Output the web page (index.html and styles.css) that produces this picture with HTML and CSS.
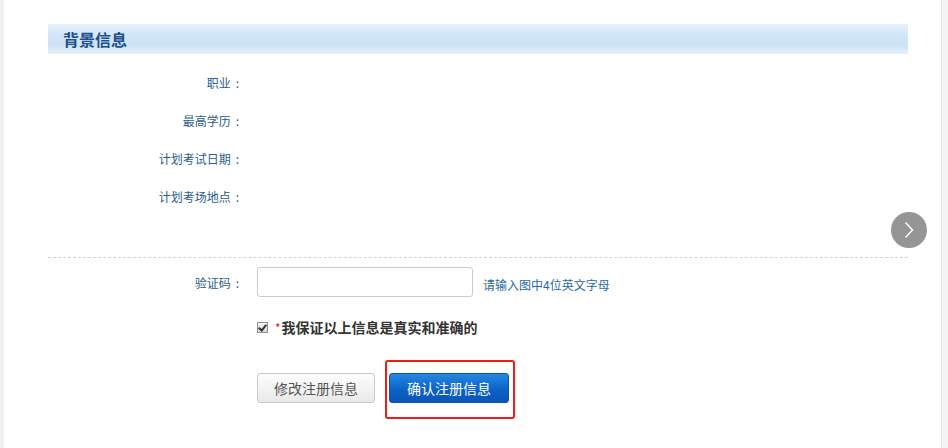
FILE: index.html
```html
<!DOCTYPE html>
<html lang="zh-CN">

<head>
    <title>背景信息</title>
    <link rel="stylesheet" href="styles.css">
</head>

<body>
    <div class="page">
        <div class="edge-left"></div>
        <div class="main">
            <div class="section-title">背景信息</div>

            <div class="rows">
                <div class="row">
                    <div class="label">职业<span class="colon">:</span></div>
                    <div class="value"></div>
                </div>
                <div class="row">
                    <div class="label">最高学历<span class="colon">:</span></div>
                    <div class="value"></div>
                </div>
                <div class="row">
                    <div class="label">计划考试日期<span class="colon">:</span></div>
                    <div class="value"></div>
                </div>
                <div class="row">
                    <div class="label">计划考场地点<span class="colon">:</span></div>
                    <div class="value"></div>
                </div>
            </div>

            <a class="next-btn" href="#">
                <svg width="36" height="36" viewBox="0 0 36 36">
                    <path d="M14.5 10.5 L21.5 18 L14.5 25.5" fill="none" stroke="#ffffff" stroke-width="1.5" />
                </svg>
            </a>

            <div class="divider"></div>

            <div class="captcha-row">
                <div class="label">验证码<span class="colon">:</span></div>
                <input type="text" class="captcha-input">
                <span class="hint">请输入图中4位英文字母</span>
            </div>

            <div class="agree-row">
                <input type="checkbox" id="agree" checked>
                <label for="agree"><span class="star">*</span>我保证以上信息是真实和准确的</label>
            </div>

            <div class="button-row">
                <button class="btn btn-gray">修改注册信息</button>
                <div class="highlight">
                    <button class="btn btn-blue">确认注册信息</button>
                </div>
            </div>
        </div>
        <div class="edge-right"></div>
    </div>
</body>

</html>
```

FILE: styles.css
```css
body {
    margin: 0;
    font-family: "Noto Sans CJK SC", "Liberation Sans", sans-serif;
    font-size: 12px;
    color: #333333;
    background: #ffffff;
}

.page {
    display: flex;
    height: 448px;
    overflow: hidden;
}

.edge-left {
    width: 4px;
    background: #f0f0f0;
}

.edge-right {
    width: 6px;
    background: #f3f3f3;
    border-left: 1px solid #e6e6e6;
}

.main {
    flex: 1;
    position: relative;
    padding: 24px 33px 0 44px;
}

.section-title {
    height: 30px;
    line-height: 30px;
    padding-left: 15px;
    font-size: 16px;
    font-weight: bold;
    color: #1d4f8c;
    background: linear-gradient(#e8f2fb, #d3e6f7 35%, #cde3f6 70%, #e6f1fb);
}

.rows {
    margin-top: 9px;
}

.row {
    display: flex;
    align-items: center;
    height: 38px;
}

.label {
    width: 194px;
    text-align: right;
    color: #2b5d8a;
    font-size: 12px;
}

.colon {
    margin: 0 3px 0 5px;
}

.next-btn {
    position: absolute;
    right: 14px;
    top: 212px;
    width: 36px;
    height: 36px;
    border-radius: 50%;
    background: #959595;
    display: block;
}

.next-btn svg {
    display: block;
}

.divider {
    margin-top: 42px;
    border-top: 1px dashed #d2d2d2;
}

.captcha-row {
    display: flex;
    align-items: center;
    margin-top: 9px;
}

.captcha-input {
    margin: 0 0 0 15px;
    width: 216px;
    height: 30px;
    box-sizing: border-box;
    border: 1px solid #cccccc;
    border-radius: 3px;
    padding: 0 6px;
}

.hint {
    margin-left: 10px;
    margin-top: 5px;
    color: #1f6aa5;
    font-size: 12px;
}

.agree-row {
    display: flex;
    align-items: center;
    margin: 20px 0 0 209px;
    height: 20px;
}

.agree-row input {
    appearance: none;
    position: relative;
    width: 11px;
    height: 11px;
    margin: 0 7px 0 0;
    border: 1px solid #8f8f8f;
    background: linear-gradient(#f4f4f4, #d9d9d9);
}

.agree-row input:checked::after {
    content: "";
    position: absolute;
    left: 2px;
    top: 0px;
    width: 3px;
    height: 6px;
    border: solid #333333;
    border-width: 0 2px 2px 0;
    transform: rotate(40deg);
}

.agree-row label {
    font-size: 14px;
    font-weight: bold;
    color: #333333;
}

.star {
    color: #e02020;
    font-weight: normal;
    font-size: 12px;
    margin-right: 1px;
}

.button-row {
    display: flex;
    align-items: flex-start;
    margin: 23px 0 0 209px;
}

.btn {
    height: 30px;
    border-radius: 3px;
    font-family: "Noto Sans CJK SC", "Liberation Sans", sans-serif;
    font-size: 14px;
    cursor: pointer;
}

.btn-gray {
    width: 118px;
    margin-top: 13px;
    border: 1px solid #c8c8c8;
    color: #555555;
    background: linear-gradient(#fdfdfd, #e9e9e9);
}

.highlight {
    margin-left: 10px;
    border: 2px solid #ee1c1c;
    border-radius: 3px;
    padding: 11px 4px 14px 2px;
}

.btn-blue {
    display: block;
    width: 120px;
    border: 1px solid #0a58b4;
    color: #ffffff;
    background: linear-gradient(#2589e2, #0c62c6 55%, #0a55b8);
}
```
